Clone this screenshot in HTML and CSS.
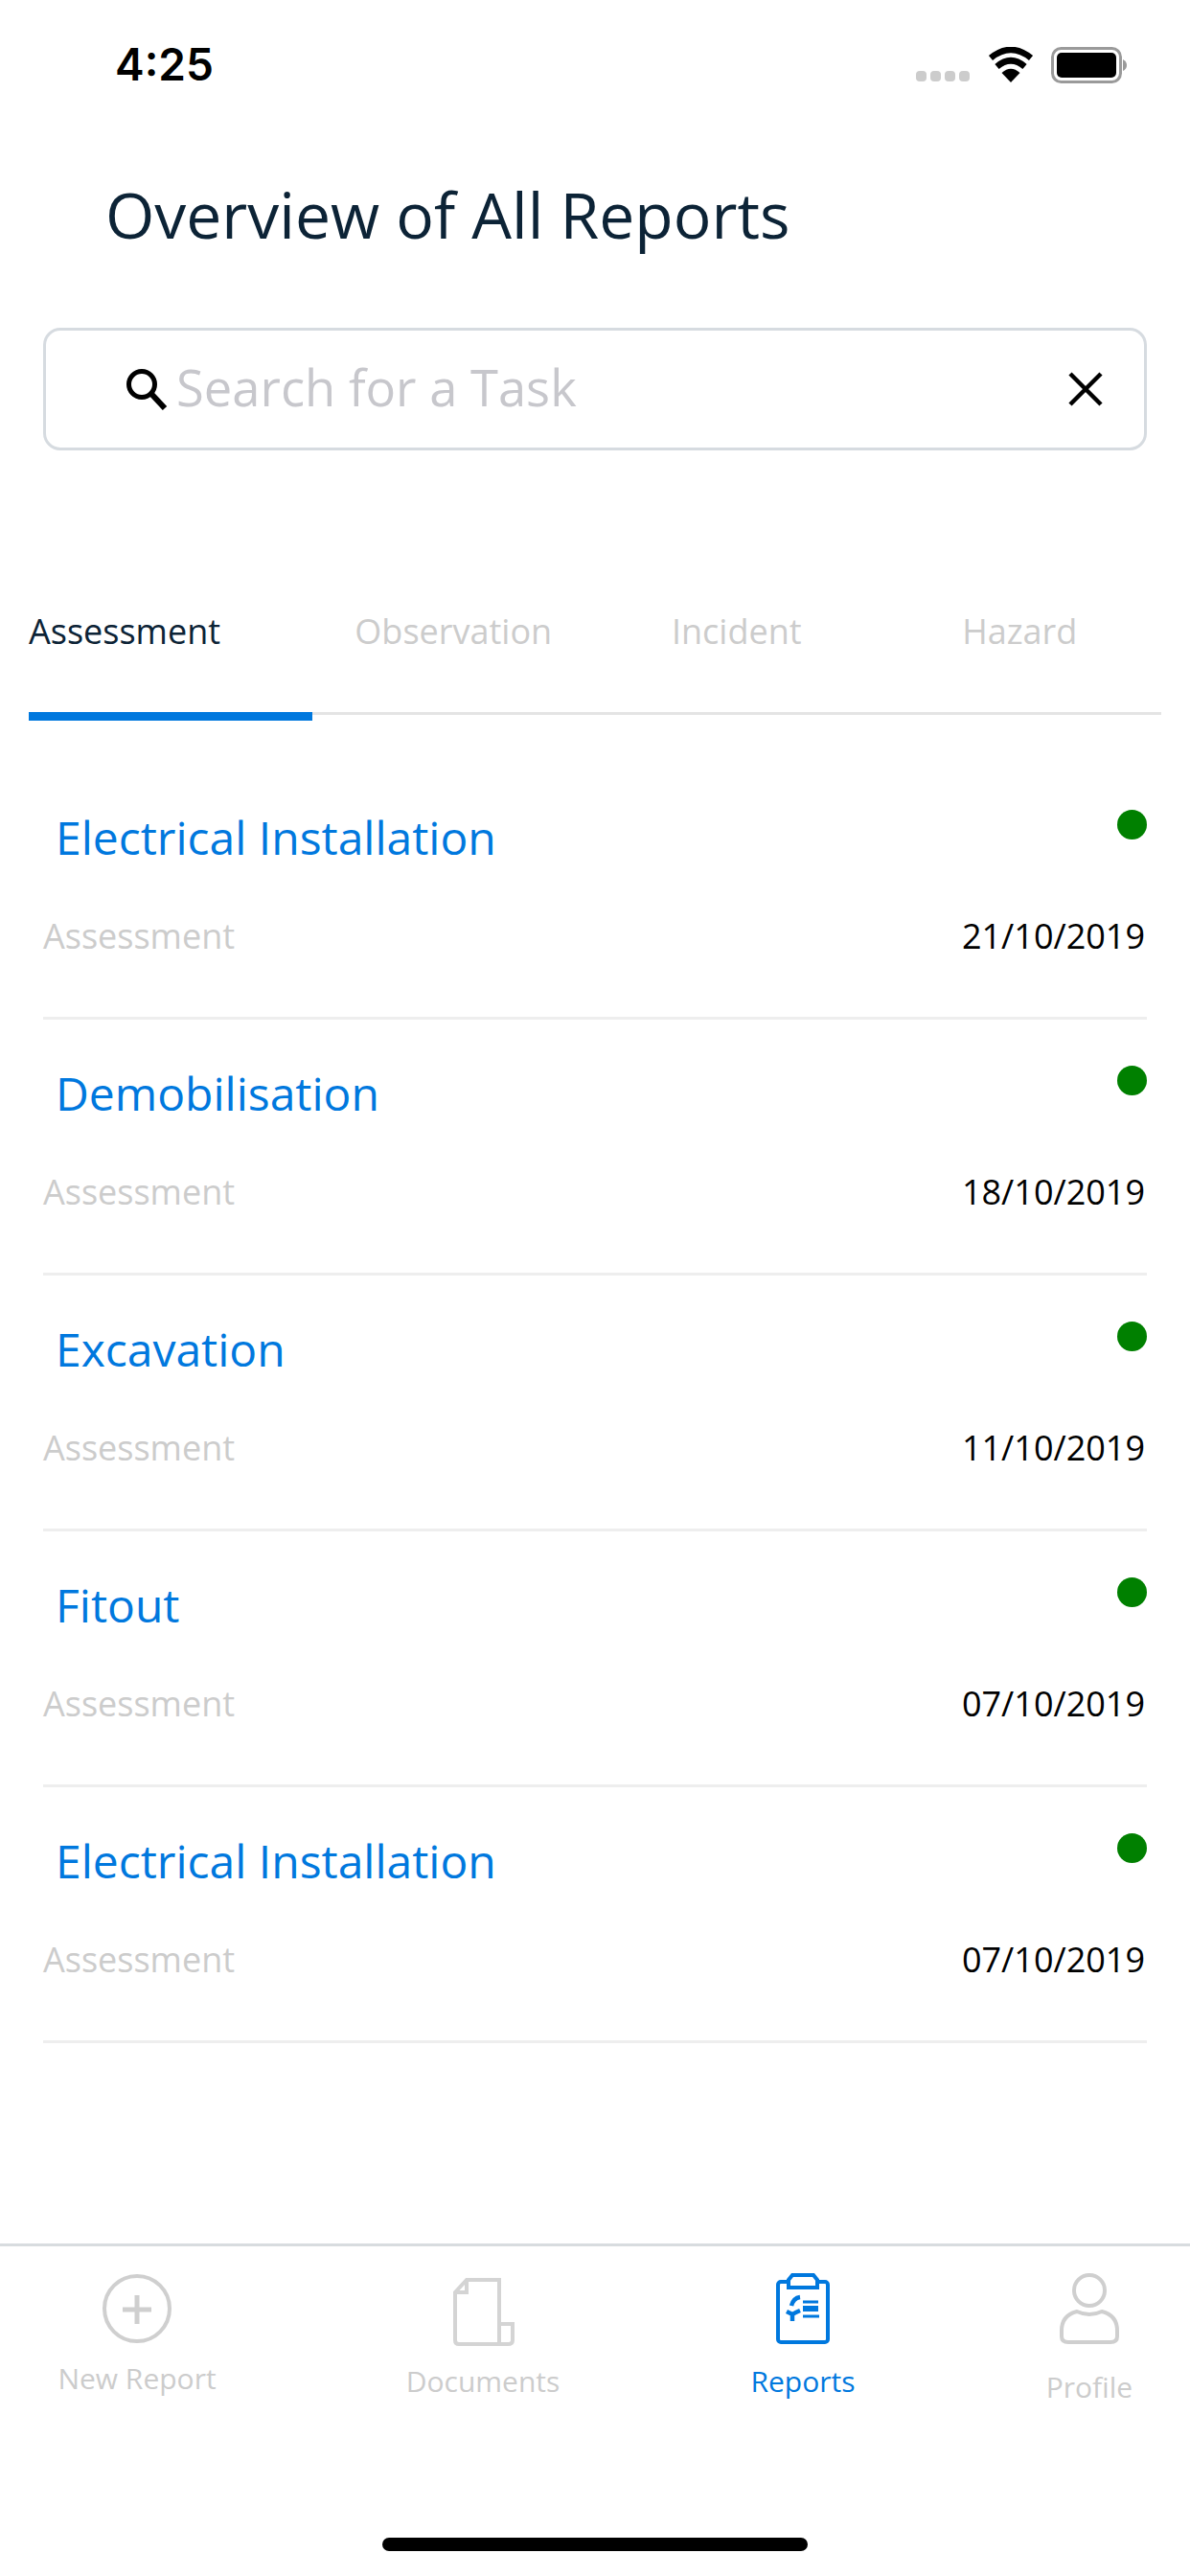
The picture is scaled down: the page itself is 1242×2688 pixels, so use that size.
FILE: index.html
```html
<!DOCTYPE html>
<html lang="en">
<head>
    <meta charset="UTF-8">
    <meta name="viewport" content="width=device-width, initial-scale=1.0">
    <title>Overview of All Reports</title>
    <link rel="stylesheet" href="styles.css">
</head>
<body>
    <!-- Status bar -->
    <div class="status-bar">
        <span class="time">4:25</span>
        <div class="status-icons">
            <div class="signal"><i></i><i></i><i></i><i></i></div>
            <svg class="wifi" width="48" height="37" viewBox="0 0 48 37">
                <path d="M24 37 L14.5 27 Q24 18.500 33.500 27 Z" fill="#000"/>
                <path d="M9.500 20.500 Q24 8 38.500 20.500" fill="none" stroke="#000" stroke-width="6.500"/>
                <path d="M3 11.500 Q24 -5.500 45 11.500" fill="none" stroke="#000" stroke-width="6.500"/>
            </svg>
            <svg class="battery" width="80" height="38" viewBox="0 0 80 38">
                <rect x="1.500" y="1.500" width="71" height="35" rx="9" fill="#fff" stroke="#9a9a9a" stroke-width="3"/>
                <rect x="6" y="6" width="62" height="26" rx="5" fill="#000"/>
                <path d="M75 13 Q79 15 79 19 Q79 23 75 25 Z" fill="#9a9a9a"/>
            </svg>
        </div>
    </div>

    <h1 class="page-title">Overview of All Reports</h1>

    <!-- Search -->
    <div class="search-box">
        <svg class="search-icon" width="44" height="44" viewBox="0 0 44 44">
            <circle cx="17" cy="17" r="13.500" fill="none" stroke="#000" stroke-width="5"/>
            <path d="M27 27 L41 42" stroke="#000" stroke-width="6"/>
        </svg>
        <span class="search-text">Search for a Task</span>
        <svg class="clear-icon" width="36" height="36" viewBox="0 0 36 36">
            <path d="M2 2 L34 34 M34 2 L2 34" stroke="#000" stroke-width="4.500"/>
        </svg>
    </div>

    <!-- Report type tabs -->
    <div class="tabs">
        <div class="tab active">Assessment</div>
        <div class="tab">Observation</div>
        <div class="tab">Incident</div>
        <div class="tab">Hazard</div>
    </div>

    <!-- Report list -->
    <div class="report-list">
        <div class="report">
            <div class="report-top">
                <span class="report-title">Electrical Installation</span>
                <span class="dot"></span>
            </div>
            <div class="report-bottom">
                <span class="report-type">Assessment</span>
                <span class="report-date">21/10/2019</span>
            </div>
        </div>
        <div class="report">
            <div class="report-top">
                <span class="report-title">Demobilisation</span>
                <span class="dot"></span>
            </div>
            <div class="report-bottom">
                <span class="report-type">Assessment</span>
                <span class="report-date">18/10/2019</span>
            </div>
        </div>
        <div class="report">
            <div class="report-top">
                <span class="report-title">Excavation</span>
                <span class="dot"></span>
            </div>
            <div class="report-bottom">
                <span class="report-type">Assessment</span>
                <span class="report-date">11/10/2019</span>
            </div>
        </div>
        <div class="report">
            <div class="report-top">
                <span class="report-title">Fitout</span>
                <span class="dot"></span>
            </div>
            <div class="report-bottom">
                <span class="report-type">Assessment</span>
                <span class="report-date">07/10/2019</span>
            </div>
        </div>
        <div class="report">
            <div class="report-top">
                <span class="report-title">Electrical Installation</span>
                <span class="dot"></span>
            </div>
            <div class="report-bottom">
                <span class="report-type">Assessment</span>
                <span class="report-date">07/10/2019</span>
            </div>
        </div>
    </div>

    <!-- Bottom navigation -->
    <div class="bottom-nav">
        <div class="nav-items">
            <div class="nav-item nav-new">
                <svg width="80" height="80" viewBox="0 0 80 80" fill="none" stroke="#cfcfcf" stroke-width="4">
                    <circle cx="40" cy="39" r="34"/>
                    <path d="M40 25 V55 M25 40 H55" stroke-width="5"/>
                </svg>
                <span class="nav-label">New Report</span>
            </div>
            <div class="nav-item nav-docs">
                <svg width="80" height="80" viewBox="0 0 80 80" fill="none" stroke="#d4d4d4" stroke-width="4">
                    <path d="M23 9 H57 V76 H15 Q11 76 11 72 V22 Z"/>
                    <path d="M23 9 V22 H11"/>
                    <path d="M58 55 H71 V72 Q71 76 66 76 H58"/>
                </svg>
                <span class="nav-label">Documents</span>
            </div>
            <div class="nav-item nav-reports">
                <svg width="80" height="80" viewBox="0 0 80 80" fill="none" stroke="#0078de" stroke-width="4">
                    <rect x="14" y="11" width="52" height="63" rx="3"/>
                    <path d="M29 4 H51 L55 9 V17 H25 V9 Z" fill="#fff"/>
                    <path d="M37 27 Q30 28 28 36" stroke-width="4.500"/>
                    <path d="M37 41 Q32 43 29 45 L23 42 M29 45 V52" stroke-width="4.500"/>
                    <path d="M40 32 H56 M40 47 H57" stroke-width="3"/>
                    <path d="M40 39 H56" stroke-width="6"/>
                </svg>
                <span class="nav-label">Reports</span>
            </div>
            <div class="nav-item nav-profile">
                <svg width="80" height="80" viewBox="0 0 80 80" fill="none" stroke="#cfcfcf" stroke-width="4">
                    <circle cx="40" cy="20" r="16"/>
                    <path d="M27 42 Q40 48 53 42 Q69 46 69 62 V68 Q69 74 62 74 H18 Q11 74 11 68 V62 Q11 46 27 42 Z"/>
                </svg>
                <span class="nav-label">Profile</span>
            </div>
        </div>
        <div class="home-indicator"></div>
    </div>
</body>
</html>
```

FILE: styles.css
```css
/* Global styles */
html, body {
    margin: 0;
    height: 2688px;
}

body {
    width: 1242px;
    display: flex;
    flex-direction: column;
    background-color: #ffffff;
    font-family: "Open Sans", "Noto Sans", sans-serif;
    overflow: hidden;
}

/* Status bar */
.status-bar {
    height: 100px;
    display: flex;
    justify-content: space-between;
    align-items: flex-start;
    padding: 0 65px 0 120px;
    box-sizing: border-box;
}

.time {
    margin-top: 41px;
    font-family: "Inter", "Liberation Sans", sans-serif;
    font-weight: 600;
    font-size: 46px;
    line-height: 52px;
    color: #000;
}

.status-icons {
    display: flex;
    align-items: flex-start;
    margin-top: 49px;
}

.signal {
    display: flex;
    gap: 4px;
    margin-top: 25px;
    margin-right: 19px;
}

.signal i {
    width: 11px;
    height: 11px;
    border-radius: 4px;
    background-color: #cccccc;
}

.wifi {
    margin-right: 18px;
}

/* Page title */
.page-title {
    margin: 83px 0 0 110px;
    font-size: 66px;
    line-height: 80px;
    font-weight: 400;
    color: #0c2336;
}

/* Search */
.search-box {
    margin: 79px 45px 0;
    height: 128px;
    display: flex;
    align-items: center;
    padding: 0 43px 0 83px;
    border: 3px solid #d6dbe0;
    border-radius: 18px;
    box-sizing: border-box;
}

.search-icon {
    margin-right: 9px;
}

.search-text {
    flex: 1;
    padding-bottom: 4px;
    font-size: 52.5px;
    line-height: 70px;
    color: #c7c7cc;
}

/* Tabs */
.tabs {
    margin: 150px 30px 0;
    display: flex;
    height: 123px;
    border-bottom: 3px solid #e4e4e4;
}

.tab {
    flex: 1;
    position: relative;
    text-align: center;
    font-size: 36px;
    line-height: 78px;
    color: #cccccc;
}

.tab.active {
    text-align: left;
    color: #0c2336;
}

.tab.active::after {
    content: "";
    position: absolute;
    left: 0;
    right: 0;
    top: 123px;
    height: 9px;
    background-color: #0078de;
}

/* Report list */
.report-list {
    margin: 51px 45px 0;
}

.report {
    height: 267px;
    padding-top: 44px;
    border-bottom: 3px solid #eeeeee;
    box-sizing: border-box;
}

.report-top,
.report-bottom {
    display: flex;
    justify-content: space-between;
}

.report-top {
    align-items: flex-start;
}

.report-title {
    padding-left: 13px;
    font-size: 48px;
    line-height: 66px;
    color: #0078de;
}

.dot {
    width: 31px;
    height: 31px;
    margin-top: 4px;
    border-radius: 50%;
    background-color: #008000;
}

.report-bottom {
    margin-top: 45px;
    font-size: 36px;
    line-height: 50px;
}

.report-type {
    color: #cccccc;
}

.report-date {
    color: #000;
    margin-right: 2px;
}

/* Bottom navigation */
.bottom-nav {
    margin-top: auto;
    height: 347px;
    display: flex;
    flex-direction: column;
    border-top: 3px solid #d8dcdf;
    box-sizing: border-box;
}

.nav-items {
    display: flex;
    align-items: flex-start;
    padding: 26px 0 0 43px;
}

.nav-item {
    width: 200px;
    display: flex;
    flex-direction: column;
    align-items: center;
}

.nav-docs { margin-left: 161px; }
.nav-reports { margin-left: 134px; }
.nav-profile { margin-left: 99px; }

.nav-label {
    margin-top: 15px;
    font-size: 30px;
    line-height: 40px;
    color: #cccccc;
}

.nav-new .nav-label { margin-top: 12px; }
.nav-profile .nav-label { margin-top: 21px; }
.nav-reports .nav-label { color: #0078de; }

.home-indicator {
    width: 444px;
    height: 14px;
    margin: auto auto 26px;
    border-radius: 7px;
    background-color: #000;
}
```
